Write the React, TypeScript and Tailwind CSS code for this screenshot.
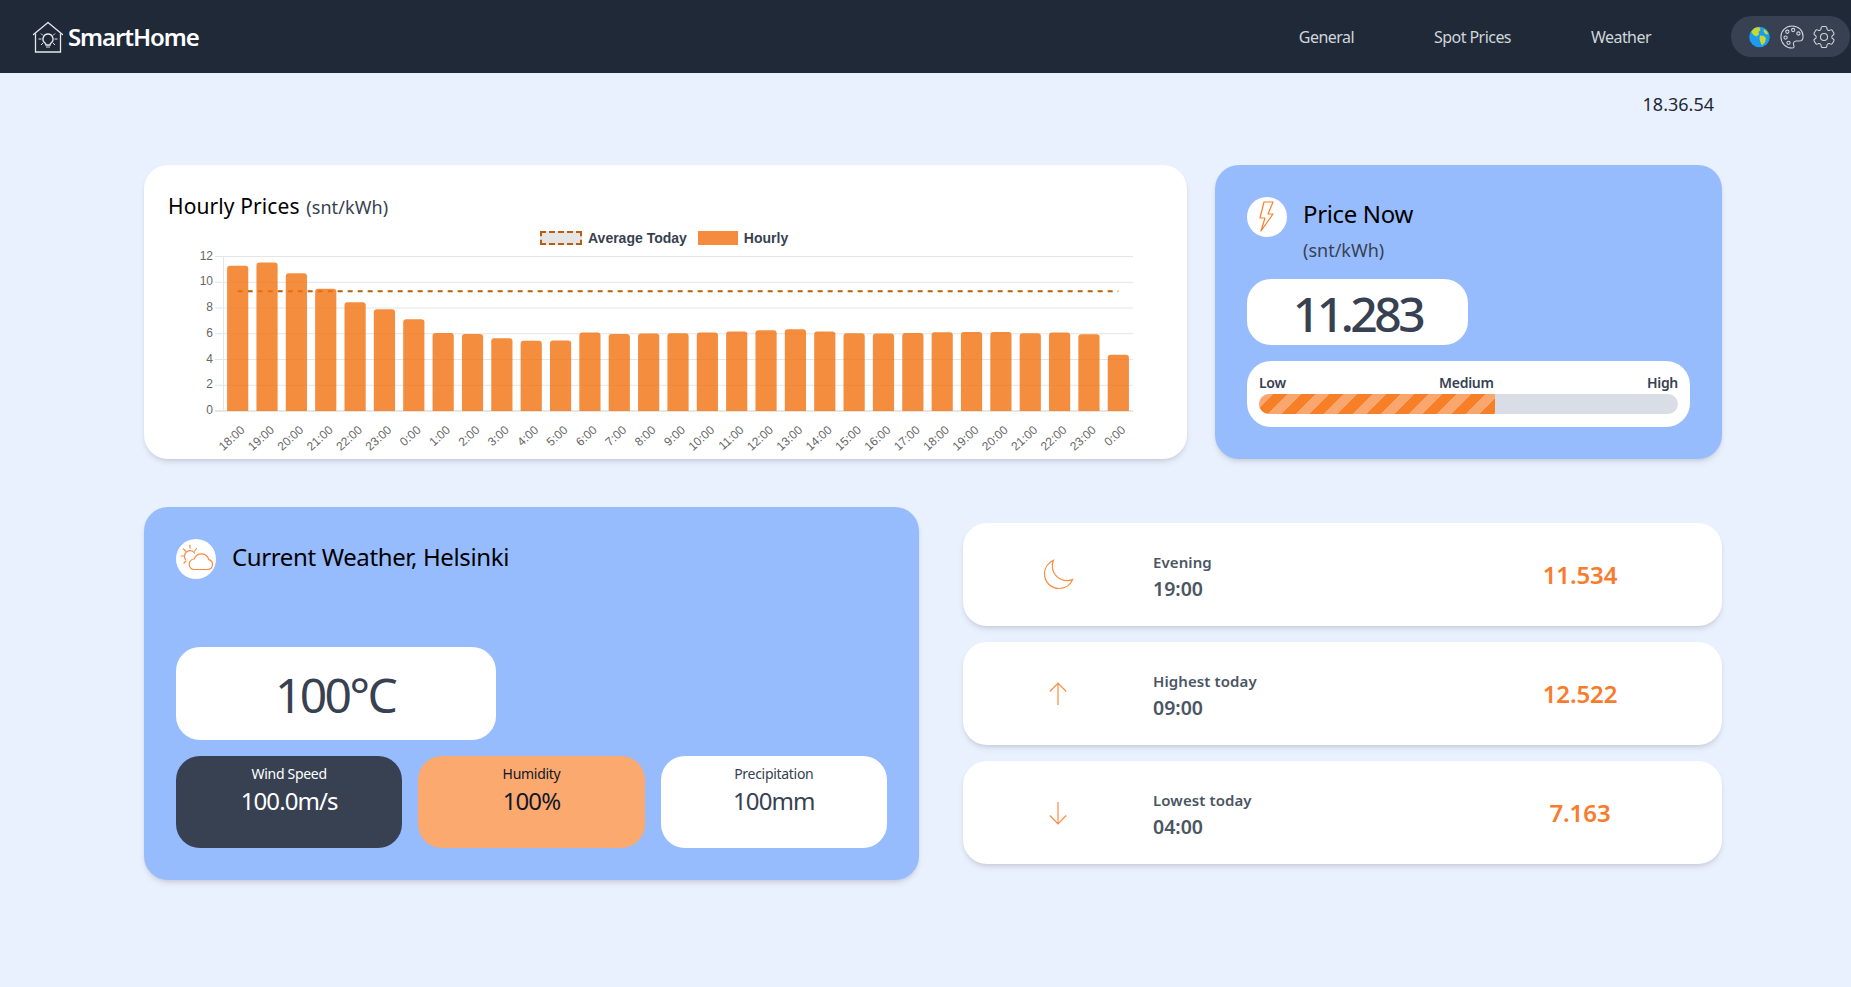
import React from "react";

const bars = [11.283,11.534,10.7,9.5,8.44,7.9,7.12,6.06,5.99,5.65,5.45,5.47,6.09,5.99,6.01,6.04,6.09,6.17,6.27,6.35,6.17,6.04,6.01,6.06,6.12,6.14,6.14,6.04,6.09,5.96,4.36];
const labels = ["18:00","19:00","20:00","21:00","22:00","23:00","0:00","1:00","2:00","3:00","4:00","5:00","6:00","7:00","8:00","9:00","10:00","11:00","12:00","13:00","14:00","15:00","16:00","17:00","18:00","19:00","20:00","21:00","22:00","23:00","0:00"];

const L = 55, R = 965, T = 0.5, B = 155;

function Chart() {
  const cw = (R - L) / bars.length;
  const unit = (B - T) / 12;
  return (
    <svg width="1000" height="200" viewBox="0 0 1000 200" className="block overflow-visible" style={{ fontFamily: '"Liberation Sans", Arial, sans-serif' }}>
      {[0, 2, 4, 6, 8, 10, 12].map((v) => {
        const y = B - v * unit;
        return (
          <g key={v}>
            <line x1={L - 8} x2={R} y1={y} y2={y} stroke={v === 0 ? "#cfcfcf" : "#e5e5e5"} />
            <text x={L - 10} y={y + 3} textAnchor="end" fontSize="12" fill="#666">{v}</text>
          </g>
        );
      })}
      <line x1={L + 0.5} x2={L + 0.5} y1={T} y2={B} stroke="#e5e5e5" />
      <line x1={L + cw / 2} x2={R - cw / 2} y1={35.3} y2={35.3} stroke="#b85f0e" strokeWidth="2" strokeDasharray="5 5" />
      {bars.map((v, i) => {
        const w = 21.2;
        const x = L + cw * (i + 0.5) - w / 2;
        const y = B - v * unit;
        return (
          <path key={i} d={`M${x} ${B}V${y + 3}Q${x} ${y} ${x + 3} ${y}H${x + w - 3}Q${x + w} ${y} ${x + w} ${y + 3}V${B}Z`} fill="#f2710f" fillOpacity="0.8" />
        );
      })}
      {labels.map((s, i) => {
        const x = L + cw * (i + 0.5) + 6;
        const y = B + 18;
        return (
          <text key={i} x={x} y={y} fontSize="12" fill="#666" textAnchor="end" transform={`rotate(-42 ${x} ${y})`} dominantBaseline="hanging" dy="-6">{s}</text>
        );
      })}
    </svg>
  );
}

function Logo() {
  return (
    <svg width="32" height="32" viewBox="0 0 32 32" fill="none" stroke="#e5e7eb" strokeWidth="1.3">
      <path d="M1.5 13.5 16 1.5l14.500 12" strokeLinejoin="round" strokeLinecap="round" />
      <path d="M3.500 12.500V31H28.500V12.500" />
      <g transform="translate(0 2)">
        <path d="M16 11a5 5 0 0 0-3 9c.7.6 1 1 1 2h4c0-1 .3-1.400 1-2a5 5 0 0 0-3-9Z" strokeWidth="1.400" />
        <path d="M14 24h4M6.500 16h3M22.500 16h3M9 10.500l2 2M23 10.500l-2 2M9 22l2-2M23 22l-2-2" strokeWidth="1" />
      </g>
    </svg>
  );
}

function Globe() {
  return (
    <svg width="21" height="22" viewBox="0 0 21 22" className="shrink-0">
      <circle cx="10.500" cy="11" r="10.300" fill="#1d9bf0" />
      <path d="M5 2.500c2-1 4-1.400 5.500-1l1 2.500-2 2 .5 2.500-2.500 2-3-1.500-1.500-2L2 6Z M11 9.500l4 .5 2 2.500-1 4-3 3-1.500-3-1-3.500Z M15 3l3 2.500 1.500 3-3-.5-2-2.500Z" fill="#c6d92e" />
    </svg>
  );
}

function ArrowIcon({ down }: { down?: boolean }) {
  return (
    <svg width="24" height="24" viewBox="0 0 24 24" fill="none" stroke="#fb8c42" strokeWidth="1.2" className={down ? "rotate-180" : ""}>
      <path d="M12 1v22M3.800 9.500 12 1l8.200 8.500" />
    </svg>
  );
}

function Moon() {
  return (
    <svg width="36" height="36" viewBox="0 0 24 24" fill="none" stroke="#fb8c42" strokeWidth="0.8">
      <path d="M21.752 15.002A9.72 9.72 0 0 1 18 15.75c-5.385 0-9.75-4.365-9.75-9.75 0-1.33.266-2.597.748-3.752A9.753 9.753 0 0 0 3 11.25C3 16.635 7.365 21 12.750 21a9.753 9.753 0 0 0 9.002-5.998Z" />
    </svg>
  );
}

function Bolt() {
  return (
    <svg width="16" height="32" viewBox="0 0 16 32" fill="none" stroke="#f97e2c" strokeWidth="1.200">
      <path d="M5 1H14L9 13H14L2 30 6 17H1Z" strokeLinejoin="round" />
    </svg>
  );
}

function CloudSun() {
  return (
    <svg width="40" height="40" viewBox="0 0 40 40" fill="none" stroke="#fb8a3e" strokeWidth="1.200" strokeLinecap="round">
      <path d="M17.500 30.500h14a5 5 0 0 0 1.200-9.850 7.500 7.500 0 0 0-14.400-.65 5.300 5.300 0 0 0-.8 10.500Z" />
      <path d="M18.500 14A5.500 5.500 0 0 0 9.500 20.500M14 6v3M5 17h2.500M7.500 10l2 2M20.500 9.500l-2 2.500M8 24l2-2" />
    </svg>
  );
}

function Row({ icon, label, time, value }: { icon: React.ReactNode; label: string; time: string; value: string }) {
  return (
    <div className="flex h-[103px] items-center rounded-3xl bg-white shadow-md">
      <div className="flex w-[190px] justify-center">{icon}</div>
      <div className="w-[352px] pt-[4px]">
        <div className="text-[15px] leading-[22px] font-semibold tracking-[0.1px] text-[#4b5563]">{label}</div>
        <div className="mt-[2px] text-[19.500px] leading-7 font-semibold text-[#4b5563]">{time}</div>
      </div>
      <div className="w-[150px] text-center text-[24px] leading-8 font-semibold tracking-[-0.1px] text-[#f97b2c]">{value}</div>
    </div>
  );
}

function Stat({ label, value, cls }: { label: string; value: string; cls: string }) {
  return (
    <div className={`h-[92px] flex-1 rounded-3xl pt-2 text-center ${cls}`}>
      <div className="text-[14px] leading-5 tracking-[-0.3px]">{label}</div>
      <div className="mt-px text-[24px] leading-8 tracking-[-0.9px]">{value}</div>
    </div>
  );
}

export default function App() {
  return (
    <div className="min-h-[987px] bg-[#e9f0fe] font-['Noto_Sans',sans-serif]">
      <nav className="flex h-[73px] items-center bg-[#1f2937] pl-[32px] pr-px">
        <div className="flex items-center gap-[4px]">
          <Logo />
          <span className="text-[24px] font-semibold tracking-[-1.100px] text-white">SmartHome</span>
        </div>
        <div className="ml-auto flex items-center gap-[80px] pr-[80px] text-[16px] tracking-[-0.55px] text-[#d1d5db]">
          <span>General</span>
          <span>Spot Prices</span>
          <span>Weather</span>
        </div>
        <div className="flex h-[41px] w-[119px] items-center gap-[4px] rounded-full bg-[#374151] pl-[18px] text-[#d1d5db]">
          <Globe />
          <svg width="28" height="28" viewBox="0 0 24 24" fill="none" stroke="currentColor" strokeWidth="0.9" className="ml-[4px] shrink-0">
            <path d="M12 2.500a9.500 9.500 0 0 0 0 19c2 0 2-1.500 1.500-2.500-.8-1.500 0-3.500 2-3.500h2.500c2 0 3.500-1.500 3.500-4C21.500 6.500 17.500 2.500 12 2.500Z" />
            <circle cx="8" cy="7.500" r="1.400" /><circle cx="13" cy="6" r="1.400" /><circle cx="17.500" cy="9" r="1.400" /><circle cx="6.500" cy="12.500" r="1.400" /><circle cx="9" cy="17" r="1.400" />
          </svg>
          <svg width="28" height="28" viewBox="0 0 24 24" fill="none" stroke="currentColor" strokeWidth="0.9" className="shrink-0">
            <path d="M9.594 3.940c.09-.542.560-.940 1.110-.940h2.593c.550 0 1.020.398 1.110.940l.213 1.281c.063.374.313.686.645.870.074.040.147.083.220.127.325.196.720.257 1.075.124l1.217-.456a1.125 1.125 0 0 1 1.370.490l1.296 2.247a1.125 1.125 0 0 1-.260 1.431l-1.003.827c-.293.241-.438.613-.430.992a7.723 7.723 0 0 1 0 .255c-.008.378.137.750.430.991l1.004.827c.424.350.534.955.260 1.430l-1.298 2.247a1.125 1.125 0 0 1-1.369.491l-1.217-.456c-.355-.133-.750-.072-1.076.124a6.470 6.470 0 0 1-.220.128c-.331.183-.581.495-.644.869l-.213 1.281c-.090.543-.560.940-1.110.940h-2.594c-.550 0-1.019-.398-1.110-.940l-.213-1.281c-.062-.374-.312-.686-.644-.870a6.520 6.520 0 0 1-.220-.127c-.325-.196-.720-.257-1.076-.124l-1.217.456a1.125 1.125 0 0 1-1.369-.490l-1.297-2.247a1.125 1.125 0 0 1 .260-1.431l1.004-.827c.292-.240.437-.613.430-.991a6.932 6.932 0 0 1 0-.255c.007-.380-.138-.751-.430-.992l-1.004-.827a1.125 1.125 0 0 1-.260-1.430l1.297-2.247a1.125 1.125 0 0 1 1.370-.491l1.216.456c.356.133.751.072 1.076-.124.072-.044.146-.086.220-.128.332-.183.582-.495.644-.869l.214-1.280Z" />
            <path d="M15 12a3 3 0 1 1-6 0 3 3 0 0 1 6 0Z" />
          </svg>
        </div>
      </nav>

      <main className="w-[1722px] pl-[144px]">
        <div className="flex h-[92px] items-start justify-end pr-[8px] pt-[17px] text-[18px] leading-7 text-[#1f2937]">18.36.54</div>

        <div className="flex gap-[28px]">
          <section className="h-[294px] w-[1043px] rounded-3xl bg-white pl-[24px] pt-[27px] shadow-md">
            <h2 className="h-[31px] text-[21px] leading-7 tracking-[0.1px] text-black">
              Hourly Prices <span className="ml-[1px] text-[18px] text-[#374151]">(snt/kWh)</span>
            </h2>
            <div className="flex h-[33px] items-start pl-[372px] pt-[8px] font-['Liberation_Sans',sans-serif] text-[14px] leading-[14px] font-bold text-[#374151]">
              <span className="h-[14px] w-[42px] border-2 border-dashed border-[#b85f0e] bg-[#e5e5e5]" />
              <span className="ml-[6px]">Average Today</span>
              <span className="ml-[11px] h-[14px] w-[40px] bg-[#f58b3e]" />
              <span className="ml-[6px]">Hourly</span>
            </div>
            <Chart />
          </section>

          <section className="h-[294px] w-[507px] rounded-3xl bg-[#97bcfe] px-[32px] pt-[32px] shadow-md">
            <div className="flex gap-[16px]">
              <div className="flex h-[40px] w-[40px] items-center justify-center rounded-full bg-white"><Bolt /></div>
              <div>
                <div className="mt-px text-[24px] leading-8 tracking-[-0.35px] text-black">Price Now</div>
                <div className="mt-[6px] text-[18px] leading-7 text-[#374151]">(snt/kWh)</div>
              </div>
            </div>
            <div className="mt-[15px] flex h-[66px] w-[221px] items-center justify-center rounded-3xl bg-white pt-[3px] text-[48px] font-medium tracking-[-3.500px] text-[#374151]">11.283</div>
            <div className="mt-[16px] h-[66px] w-[443px] rounded-3xl bg-white px-[12px] pt-[12px]">
              <div className="flex justify-between text-[14px] leading-[20px] font-semibold tracking-[-0.3px] text-[#374151]">
                <span>Low</span><span>Medium</span><span>High</span>
              </div>
              <div className="mt-[1px] h-[20px] overflow-hidden rounded-full bg-[#d9dde5]">
                <div className="h-full w-[236px] bg-[repeating-linear-gradient(135deg,#faa76f_0,#faa76f_10px,#f67f28_10px,#f67f28_20px)]" />
              </div>
            </div>
          </section>
        </div>

        <div className="mt-[48px] flex items-start gap-[44px]">
          <section className="h-[373px] w-[775px] rounded-3xl bg-[#97bcfe] px-[32px] pt-[32px] shadow-md">
            <div className="flex gap-[16px]">
              <div className="flex h-[40px] w-[40px] items-center justify-center rounded-full bg-white"><CloudSun /></div>
              <div className="text-[24px] leading-[36px] tracking-[-0.37px] text-black">Current Weather, Helsinki</div>
            </div>
            <div className="mt-[68px] flex h-[93px] w-[320px] items-center justify-center rounded-3xl bg-white pt-[3px] pr-[2px] text-[48px] tracking-[-2.600px] text-[#374151]">100°C</div>
            <div className="mt-[16px] flex gap-[16px]">
              <Stat label="Wind Speed" value="100.0m/s" cls="bg-[#374151] text-white" />
              <Stat label="Humidity" value="100%" cls="bg-[#fba96f] text-[#111827]" />
              <Stat label="Precipitation" value="100mm" cls="bg-white text-[#374151]" />
            </div>
          </section>

          <div className="mt-[16px] flex w-[759px] flex-col gap-[16px]">
            <Row icon={<Moon />} label="Evening" time="19:00" value="11.534" />
            <Row icon={<ArrowIcon />} label="Highest today" time="09:00" value="12.522" />
            <Row icon={<ArrowIcon down />} label="Lowest today" time="04:00" value="7.163" />
          </div>
        </div>
      </main>
    </div>
  );
}
